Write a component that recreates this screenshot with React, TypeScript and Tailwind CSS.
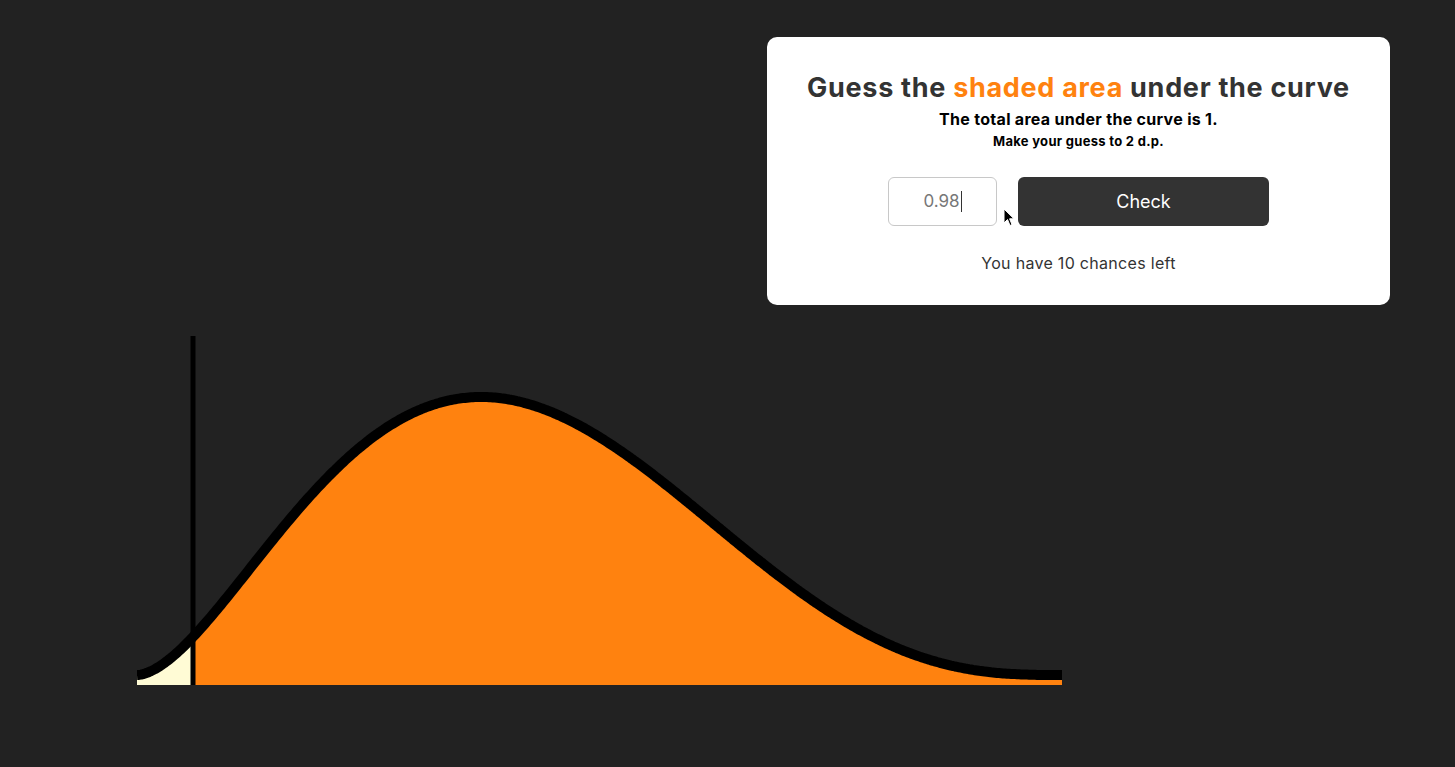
import React from 'react';

// skewed bell curve (beta-shaped), fitted to the chart
const W = 925;
const H = 349;
const BASE = 339;
const PEAK = 278;
const LINE_X = 56;

function ratio(t: number) {
  const a = 2.75;
  const m = 0.372;
  const b = (a - 1) / m + 2 - a;
  if (t <= 0 || t >= 1) return 0;
  return Math.pow(t / m, a - 1) * Math.pow((1 - t) / (1 - m), b - 1);
}

function curvePoints(from: number, to: number) {
  const pts: [number, number][] = [];
  for (let x = from; x <= to; x += 2) {
    pts.push([x, BASE - PEAK * ratio(x / W)]);
  }
  if (pts[pts.length - 1][0] !== to) pts.push([to, BASE - PEAK * ratio(to / W)]);
  return pts;
}

function toPath(pts: [number, number][]) {
  return pts.map((p, i) => `${i ? 'L' : 'M'}${p[0].toFixed(1)},${p[1].toFixed(1)}`).join(' ');
}

function Chart() {
  const all = curvePoints(0, W);
  const left = curvePoints(0, LINE_X);
  const right = curvePoints(LINE_X, W);
  const leftFill = `${toPath(left)} L${LINE_X},${H} L0,${H} Z`;
  const rightFill = `${toPath(right)} L${W},${H} L${LINE_X},${H} Z`;

  return (
    <svg width={W} height={H} viewBox={`0 0 ${W} ${H}`} className="block">
      <path d={leftFill} fill="#fffbd5" />
      <path d={rightFill} fill="#ff820f" />
      <path d={toPath(all)} fill="none" stroke="#000" strokeWidth={10} strokeLinejoin="round" />
      <line x1={LINE_X} y1={0} x2={LINE_X} y2={H} stroke="#000" strokeWidth={5} />
    </svg>
  );
}

function Pointer() {
  return (
    <svg width="12" height="19" viewBox="0 0 12 19" className="absolute left-[236px] top-[31px]">
      <path d="M1 1 L1 15 L4.5 11.5 L7 17.5 L9 16.6 L6.6 10.8 L11 10.8 Z" fill="#000" stroke="#fff" strokeWidth="1" strokeLinejoin="round" />
    </svg>
  );
}

function GuessCard() {
  return (
    <div className="w-[623px] rounded-[10px] bg-white pt-[33px] pb-[32px] text-center font-['Inter',sans-serif]">
      <h1 className="text-[27px] leading-[36px] font-bold text-[#333] tracking-[0.7px]">
        Guess the <span className="text-[#ff820f]">shaded area</span> under the curve
      </h1>
      <p className="mt-[2px] text-[16px] leading-[22px] font-bold tracking-[0.3px] text-black">The total area under the curve is 1.</p>
      <p className="text-[13px] leading-[22px] font-bold tracking-[0.3px] text-black">Make your guess to 2 d.p.</p>

      <div className="relative mt-[25px] flex justify-center gap-[21px]">
        <div className="flex h-[49px] w-[109px] items-center justify-center rounded-[6px] border border-[#c8c8c8] text-[17px] text-[#777]">
          <span>0.98</span>
          <span className="ml-[1px] h-[21px] w-px bg-[#333]" />
        </div>
        <button className="h-[49px] w-[251px] rounded-[6px] bg-[#333] text-[18px] text-white">Check</button>
        <Pointer />
      </div>

      <p className="mt-[27px] text-[16px] leading-[20px] tracking-[0.3px] text-[#333]">You have 10 chances left</p>
    </div>
  );
}

export default function App() {
  return (
    <div className="min-h-screen w-full bg-[#222222]">
      <div className="flex justify-end pt-[37px] pr-[65px]">
        <GuessCard />
      </div>
      <div className="mt-[31px] pl-[137px]">
        <Chart />
      </div>
    </div>
  );
}
